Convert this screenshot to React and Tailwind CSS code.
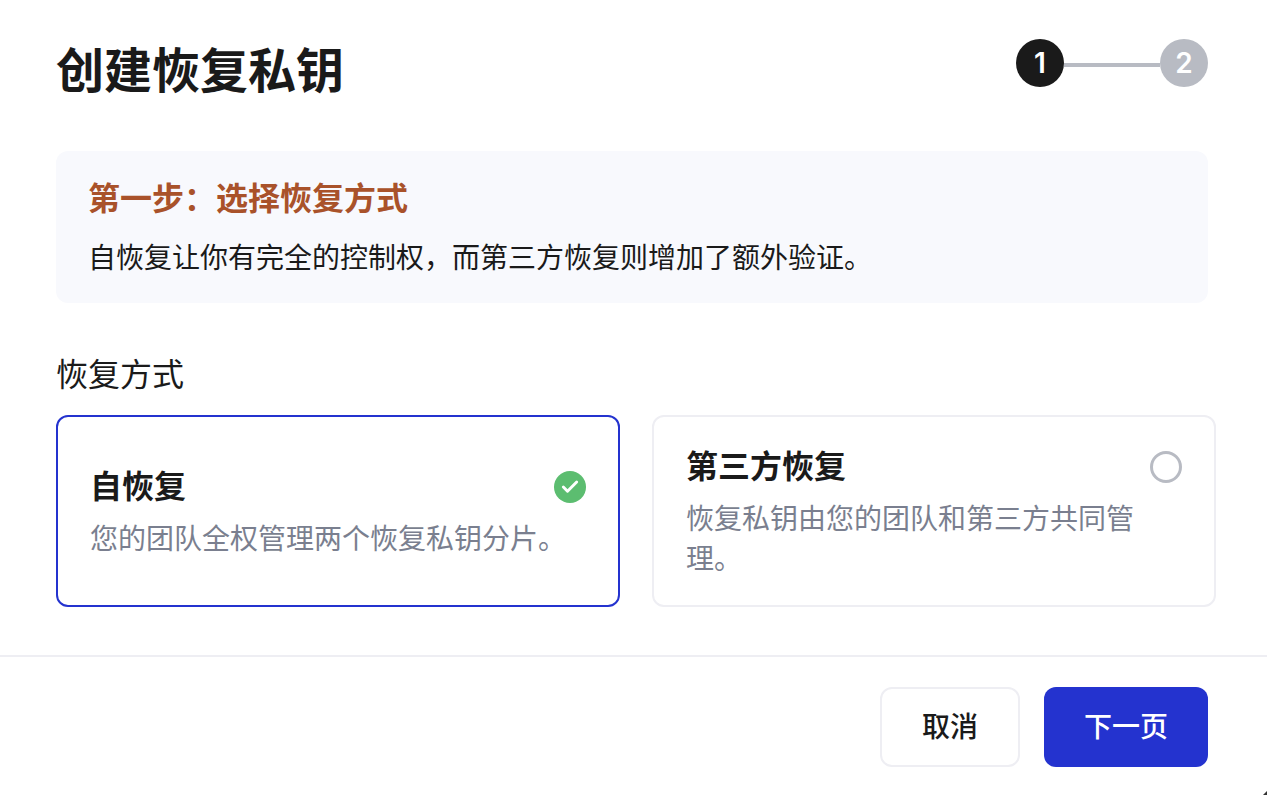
import { Check } from 'lucide-react';

const fontStack = "font-['Inter','Noto_Sans_CJK_SC',sans-serif]";

function Stepper() {
  return (
    <div className="flex items-center">
      <div className="w-12 h-12 rounded-full bg-[#1a1a1a] text-white flex items-center justify-center text-[28px] font-semibold">1</div>
      <div className="w-24 h-1 mt-1 bg-[#b8bbc3]" />
      <div className="w-12 h-12 rounded-full bg-[#b8bbc3] text-white flex items-center justify-center text-[28px] font-semibold">2</div>
    </div>
  );
}

function OptionCard({ title, description, selected }) {
  return (
    <div className={`w-[564px] h-[192px] shrink-0 rounded-xl border-2 pl-8 pr-8 pt-[2px] flex items-center bg-white ${selected ? 'border-[#2433cf]' : 'border-[#eeeef3]'}`}>
      <div className="flex-1 flex justify-between items-start">
        <div className={selected ? 'w-[476px] shrink-0' : 'w-[450px] shrink-0'}>
          <p className="text-[32px] leading-[44px] font-semibold text-[#1a1a1a]">{title}</p>
          <p className="text-[28px] leading-10 mt-[10px] text-[#7a7f8f]">{description}</p>
        </div>
        {selected ? (
          <div className="w-8 h-8 mt-[6px] -ml-3 shrink-0 rounded-full bg-[#5cbd70] flex items-center justify-center">
            <Check size={20} strokeWidth={3.5} color="#ffffff" />
          </div>
        ) : (
          <div className="w-8 h-8 mt-[6px] shrink-0 rounded-full border-[3px] border-[#b8bbc3]" />
        )}
      </div>
    </div>
  );
}

export default function App() {
  return (
    <div className={`relative w-[1267px] h-[795px] bg-white overflow-hidden ${fontStack}`}>
      <header className="pl-14 pr-[59px] pt-[39px] flex justify-between items-start h-[151px]">
        <h1 className="text-[48px] leading-[64px] font-semibold text-[#1a1a1a]">创建恢复私钥</h1>
        <Stepper />
      </header>

      <div className="mx-14 w-[1152px] h-[152px] rounded-xl bg-[#f8f9fd] px-8 pt-[26px]">
        <p className="text-[32px] leading-[44px] font-semibold text-[#a9522a]">第一步：选择恢复方式</p>
        <p className="text-[28px] leading-10 mt-[17px] text-[#1a1a1a]">自恢复让你有完全的控制权，而第三方恢复则增加了额外验证。</p>
      </div>

      <p className="ml-14 mt-[50px] text-[32px] leading-[44px] text-[#1a1a1a]">恢复方式</p>

      <div className="ml-14 mt-[18px] flex gap-8">
        <OptionCard selected title="自恢复" description="您的团队全权管理两个恢复私钥分片。" />
        <OptionCard title="第三方恢复" description="恢复私钥由您的团队和第三方共同管理。" />
      </div>

      <footer className="mt-[48px] border-t-2 border-[#eeeef3] pr-[59px] pt-[30px] flex justify-end gap-6">
        <button className="w-[140px] h-20 rounded-xl border-2 border-[#eeeef3] bg-white text-[28px] font-medium text-[#1a1a1a]">取消</button>
        <button className="w-[164px] h-20 rounded-xl bg-[#2433cf] text-[28px] font-medium text-white">下一页</button>
      </footer>

      {/* corner speck visible in the capture */}
      <svg className="absolute right-0 bottom-0 w-[4px] h-[4px]" viewBox="0 0 4 4">
        <polygon points="4,0 4,4 0,4" fill="#333333" />
      </svg>
    </div>
  );
}
